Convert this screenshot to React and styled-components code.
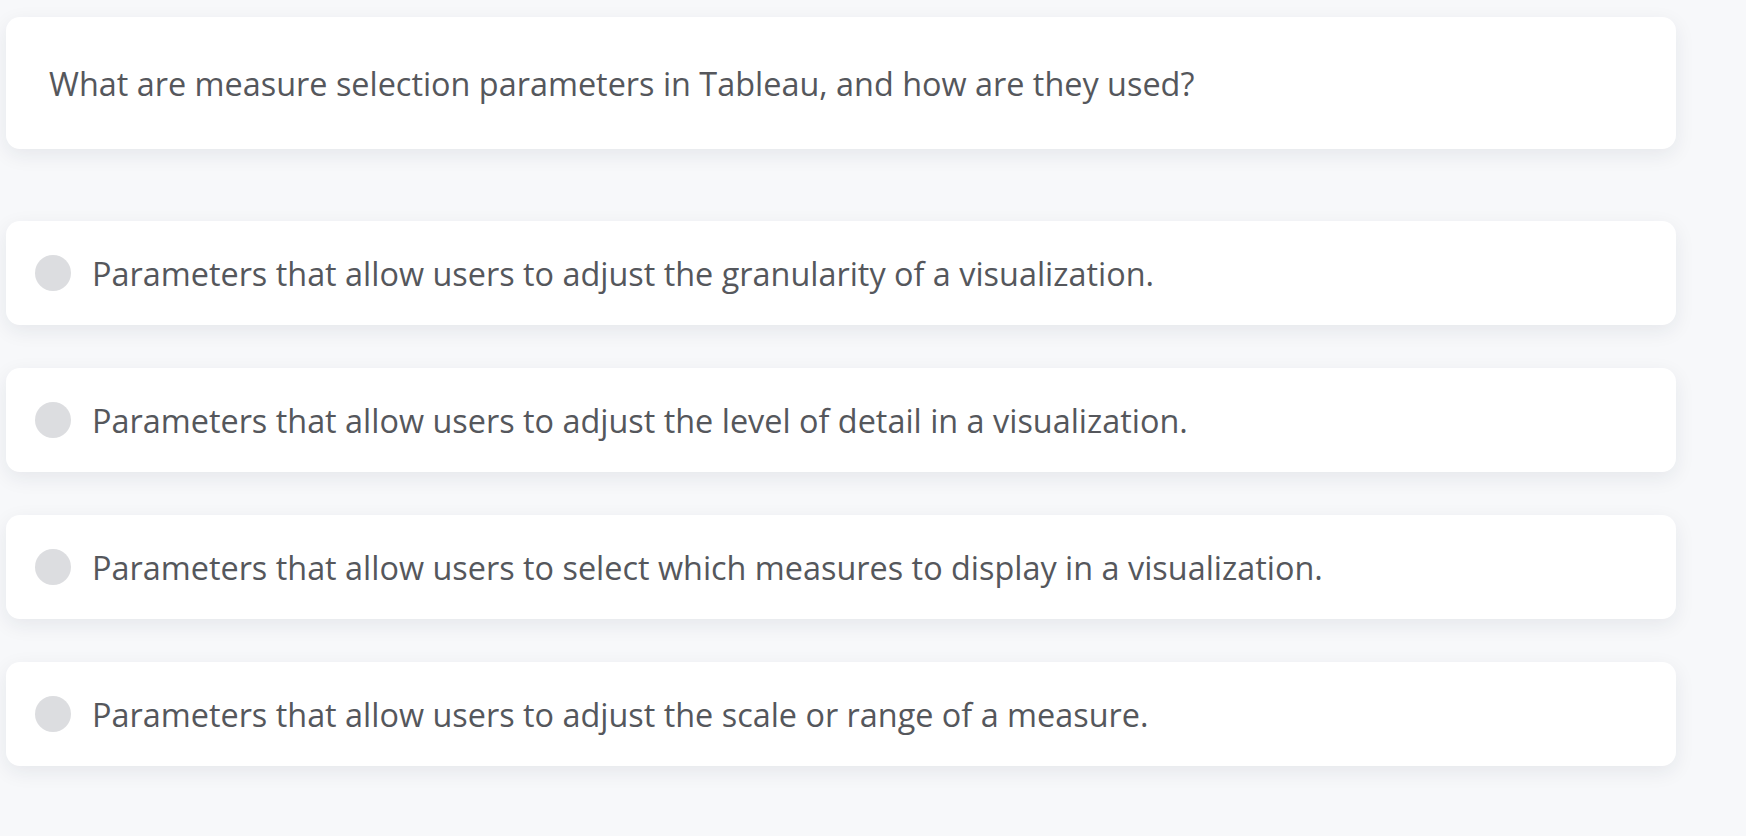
import React from 'react'
import styled, { createGlobalStyle } from 'styled-components'

const GlobalStyle = createGlobalStyle`
  html, body {
    margin: 0;
    padding: 0;
    background: #f7f8fa;
    font-family: "Open Sans", "Noto Sans", sans-serif;
  }
`;

const options = [
  'Parameters that allow users to adjust the granularity of a visualization.',
  'Parameters that allow users to adjust the level of detail in a visualization.',
  'Parameters that allow users to select which measures to display in a visualization.',
  'Parameters that allow users to adjust the scale or range of a measure.',
];

const App = () => {
  return (
    <>
      <GlobalStyle />
      <Page>
        <Wrapper>
          <QuestionCard>
            <Question>What are measure selection parameters in Tableau, and how are they used?</Question>
          </QuestionCard>
          <Options>
            {options.map((text) => (
              <OptionCard key={text}>
                <Radio />
                <OptionText>{text}</OptionText>
              </OptionCard>
            ))}
          </Options>
        </Wrapper>
      </Page>
    </>
  )
};

export default App;

const Page = styled.div`
  min-height: 836px;
  padding: 17px 0 0 6px;
  box-sizing: border-box;
`;
const Wrapper = styled.div`
  width: 1670px;
  display: flex;
  flex-direction: column;
`;
const QuestionCard = styled.div`
  height: 132px;
  box-sizing: border-box;
  background: #fff;
  border-radius: 14px;
  box-shadow: 0 6px 20px rgba(30, 35, 60, 0.08);
  display: flex;
  align-items: center;
  padding: 1px 0 0 43px;
`;
const Question = styled.div`
  color: #55575c;
  font-size: 32.4px;
  line-height: 1.3;
`;
const Options = styled.div`
  margin-top: 72px;
  display: flex;
  flex-direction: column;
  gap: 43px;
`;
const OptionCard = styled.div`
  height: 104px;
  box-sizing: border-box;
  background: #fff;
  border-radius: 14px;
  box-shadow: 0 6px 20px rgba(30, 35, 60, 0.08);
  display: flex;
  align-items: center;
  padding-left: 29px;
  gap: 21px;
  cursor: pointer;
`;
const Radio = styled.span`
  width: 36px;
  height: 36px;
  border-radius: 50%;
  background: #dcdde0;
  flex-shrink: 0;
`;
const OptionText = styled.div`
  color: #55575c;
  font-size: 32.4px;
  line-height: 1.3;
  padding-top: 1px;
`;
